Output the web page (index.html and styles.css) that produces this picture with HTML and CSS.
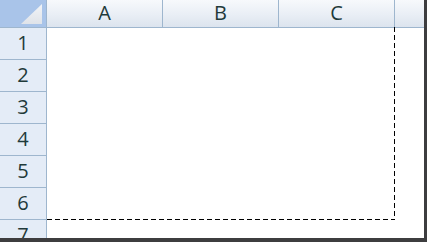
FILE: index.html
```html
<!DOCTYPE html>
<html>
<head>
<meta charset="utf-8">
<link rel="stylesheet" href="styles.css">
</head>
<body>
<div class="window">
  <div class="sheet">
    <div class="corner"><span class="tri"></span></div>
    <div class="colhead">A</div>
    <div class="colhead">B</div>
    <div class="colhead">C</div>
    <div class="colhead last"></div>

    <div class="rowhead">1</div><div class="cell span"></div>
    <div class="rowhead">2</div><div class="cell span"></div>
    <div class="rowhead">3</div><div class="cell span"></div>
    <div class="rowhead">4</div><div class="cell span"></div>
    <div class="rowhead">5</div><div class="cell span"></div>
    <div class="rowhead">6</div><div class="cell span"></div>
    <div class="rowhead">7</div><div class="cell span"></div>
  </div>
  <svg class="marquee" width="349" height="193" viewBox="0 0 349 193">
    <line x1="0" y1="192.5" x2="348" y2="192.5" stroke="#000" stroke-width="1" stroke-dasharray="5 3"/>
    <line x1="347.5" y1="0" x2="347.5" y2="193" stroke="#000" stroke-width="1" stroke-dasharray="5 3"/>
  </svg>
</div>
</body>
</html>
```

FILE: styles.css
```css
html {
  background: #3d3d3f;
}
body {
  margin: 0;
  width: 427px;
  height: 242px;
  overflow: hidden;
}
.window {
  position: relative;
  width: 424px;
  height: 238px;
  overflow: hidden;
  background: #ffffff;
}
.sheet {
  display: grid;
  grid-template-columns: 47px 116px 116px 116px 1fr;
  grid-template-rows: 28px repeat(7, 32px);
  font-family: "Open Sans", "Liberation Sans", sans-serif;
  font-size: 20px;
  color: #1f3a3a;
}
.corner {
  position: relative;
  background: #a9c4e9;
  border-right: 1px solid #9eb6ce;
  border-bottom: 1px solid #9eb6ce;
}
.tri {
  position: absolute;
  left: 21px;
  top: 4px;
  width: 21px;
  height: 20px;
  background: linear-gradient(180deg, #f2f4f7, #dfe3e9);
  clip-path: polygon(100% 0, 100% 100%, 0 100%);
}
.colhead {
  display: flex;
  align-items: center;
  justify-content: center;
  background: linear-gradient(180deg, #f7f9fc 0%, #e9eef5 55%, #dce4ee 100%);
  border-right: 1px solid #9eb6ce;
  border-bottom: 1px solid #9eb6ce;
  line-height: 1;
  padding-bottom: 1px;
}
.colhead.last {
  border-right: none;
}
.rowhead {
  display: flex;
  align-items: center;
  justify-content: center;
  background: #e4ecf7;
  border-right: 1px solid #9eb6ce;
  border-bottom: 1px solid #9eb6ce;
  line-height: 1;
  padding-bottom: 1px;
}
.cell.span {
  grid-column: 2 / 6;
  background: #ffffff;
}
.marquee {
  position: absolute;
  left: 47px;
  top: 27px;
}
```
